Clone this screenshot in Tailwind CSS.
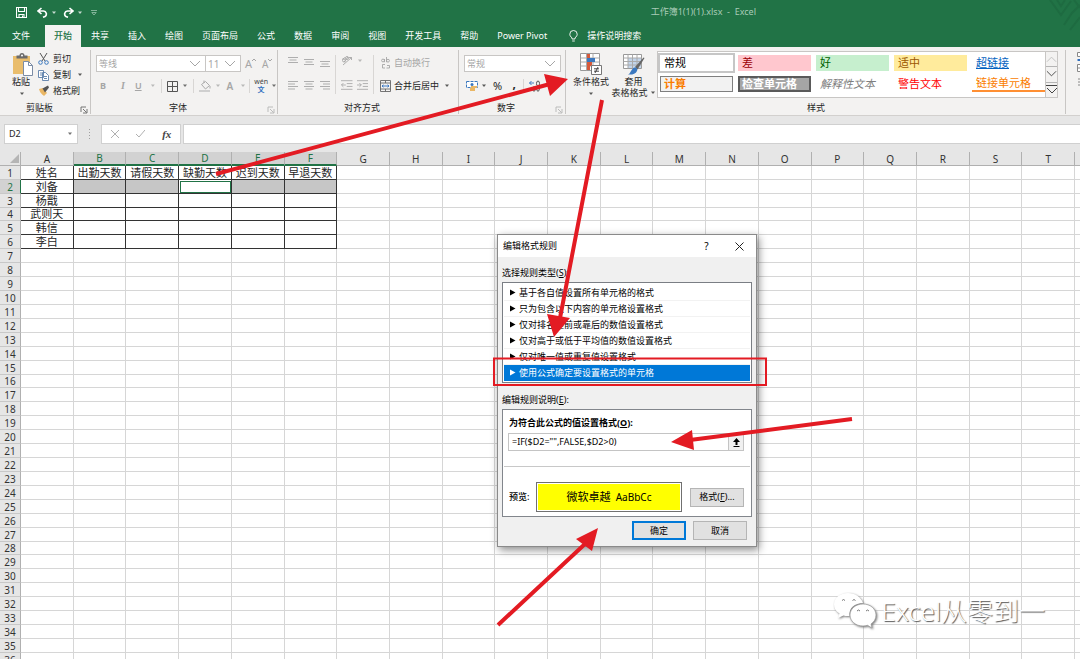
<!DOCTYPE html>
<html lang="zh-CN">
<head>
<meta charset="utf-8">
<title>工作簿1(1)(1).xlsx - Excel</title>
<script src="https://cdn.jsdelivr.net/npm/@tailwindcss/browser@4"></script>
</head>
<body class="relative flex h-screen flex-col overflow-hidden bg-[#e6e6e6] font-['Noto_Sans','Noto_Sans_CJK_SC',sans-serif] text-[9px] leading-3 text-[#262626]">

<svg class="hidden">
  <symbol id="caret" viewBox="0 0 6 4"><path d="M1 .5h4L3 3z" fill="currentColor" opacity=".75"/></symbol>
  <symbol id="chev" viewBox="0 0 12 8"><path d="M1 1l5 5 5-5" fill="none" stroke="currentColor"/></symbol>
  <symbol id="launch" viewBox="0 0 8 8"><path d="M1 6V1h5M3 3l3.500 3.500M7 3v4H3" fill="none" stroke="currentColor" stroke-width=".9"/></symbol>
  <symbol id="alL" viewBox="0 0 10 10"><path d="M0 1.500h10M0 4h7M0 6.500h10M0 9h7" stroke="currentColor" stroke-width=".9"/></symbol>
  <symbol id="alC" viewBox="0 0 10 10"><path d="M0 1.500h10M1.500 4h7M0 6.500h10M1.500 9h7" stroke="currentColor" stroke-width=".9"/></symbol>
  <symbol id="alR" viewBox="0 0 10 10"><path d="M0 1.500h10M3 4h7M0 6.500h10M3 9h7" stroke="currentColor" stroke-width=".9"/></symbol>
</svg>

<header class="relative bg-[#217346] text-white">
  <svg class="absolute top-0 right-0 h-[47px] w-9" viewBox="0 0 36 47" fill="none" stroke="#1e6b41" stroke-width="2"><path d="M6 0l11 15L27 1M13 0l4 6 4-6M20 25l8-12 8-8M26 30l10-13M30 0l6 8"/></svg>
  <div class="grid h-[25px] grid-cols-[1fr_auto] items-center pr-[324px]">
    <div class="flex items-center pl-4">
      <button aria-label="保存" class="h-[11px] w-[11px]"><svg viewBox="0 0 11 11" fill="none" stroke="#fff" class="h-full w-full"><path d="M.5.5h10v10H.5zM2.500.5v4h6v-4M3 10.500V7.500h5v3M6.500 8.500v2" stroke-width="1.100"/></svg></button>
      <button aria-label="撤消" class="ml-[10px] flex items-center gap-[3px]"><svg viewBox="0 0 11 11" class="h-[11px] w-[11px]" fill="none" stroke="#fff" stroke-width="1.600"><path d="M4.500 1L1 4l3.500 3M1.500 4h5a3 3 0 0 1 1.500 5.500L6 10.300"/></svg><svg class="h-1 w-[6px]"><use href="#caret"/></svg></button>
      <button aria-label="恢复" class="ml-[6px] flex items-center gap-[3px]"><svg viewBox="0 0 11 11" class="h-[11px] w-[11px]" fill="none" stroke="#fff" stroke-width="1.600"><path d="M6.500 1L10 4 6.500 7M9.500 4h-5A3 3 0 0 0 3 9.500l2 .8"/></svg><svg class="h-1 w-[6px]"><use href="#caret"/></svg></button>
      <button aria-label="自定义快速访问工具栏" class="ml-2 h-[6px] w-[6px] text-[#9cc5ae]"><svg viewBox="0 0 6 6" class="h-full w-full" fill="none" stroke="currentColor" stroke-width=".8"><path d="M0 .5h6M.8 2.500h4.400L3 5z"/></svg></button>
    </div>
    <h1 class="pb-[2px] whitespace-pre text-[#a9cbb7]">工作簿1(1)(1).xlsx  -  Excel</h1>
  </div>
  <nav class="flex h-[22px] items-center gap-[19px] pl-3 whitespace-nowrap">
    <button>文件</button>
    <button class="-mr-[9px] -ml-1 h-full bg-[#f3f2f1] px-[9px] font-medium text-[#217346]">开始</button>
    <button>共享</button><button>插入</button><button>绘图</button><button>页面布局</button><button>公式</button><button>数据</button><button>审阅</button><button>视图</button><button>开发工具</button><button>帮助</button><button>Power Pivot</button>
    <button class="ml-[3px] flex items-center gap-[9px]"><svg viewBox="0 0 9 12" class="h-3 w-[9px]" fill="none" stroke="#fff" stroke-width=".9"><path d="M3 9V7.800C1.500 6.800.8 5.500.8 4.200a3.700 3.700 0 0 1 7.400 0C8.200 5.500 7.500 6.800 6 7.800V9zM3.200 11h2.600"/></svg>操作说明搜索</button>
  </nav>
</header>

<div class="flex h-[69px] shrink-0 items-stretch overflow-hidden border-b border-[#d2d0ce] bg-[#f3f2f1] pt-[3px] pb-px whitespace-nowrap">
  <!-- clipboard -->
  <section class="flex w-[91px] shrink-0 flex-col border-r border-[#c8c6c4]">
    <div class="flex flex-1 gap-1 pl-3">
      <button class="flex flex-col items-start pt-[3px]">
        <svg viewBox="0 0 22 23" class="h-[23px] w-[22px]"><path d="M1 3h17v18H1z" fill="#e9bd6c"/><path d="M4.500 5.500V2.500h3a2.500 2.500 0 0 1 5 0h3v3z" fill="#6b6b6b"/><circle cx="10" cy="2.500" r="1" fill="#fff"/><path d="M11.500 8.500h5l4 4v10h-9z" fill="#fff" stroke="#7b8ca5"/><path d="M16.500 8.500v4h4" fill="none" stroke="#7b8ca5"/></svg>
        <span>粘贴</span><svg class="mt-1 ml-[7px] h-1 w-[6px]"><use href="#caret"/></svg>
      </button>
      <div class="flex flex-col gap-1 pt-[3px]">
        <button class="flex items-center gap-1"><svg viewBox="0 0 11 12" class="h-3 w-[11px]" fill="none"><path d="M2 0l5 8M9 0L4 8" stroke="#555"/><circle cx="2.500" cy="9.500" r="1.800" stroke="#3b78bf"/><circle cx="8.500" cy="9.500" r="1.800" stroke="#3b78bf"/></svg>剪切</button>
        <button class="flex items-center gap-1"><svg viewBox="0 0 11 12" class="h-3 w-[11px]" fill="#fff" stroke="#5b7ea8" stroke-width=".9"><path d="M.5 1.500h5v7h-5zM4.500 3.500h3l3 3v5h-6z"/><path d="M2 4h2M2 6h2M6 7.500h3M6 9.500h3"/></svg>复制<svg class="ml-[2px] h-1 w-[6px]"><use href="#caret"/></svg></button>
        <button class="flex items-center gap-1"><svg viewBox="0 0 11 12" class="h-3 w-[11px]"><path d="M1 4l4-1 4 5-3 3C4 9 2 8 1 4z" fill="#eab765"/><path d="M4.500 3.500L10 .5l1 2-4 5z" fill="#555"/></svg>格式刷</button>
      </div>
    </div>
    <div class="flex items-center pl-[26px]"><span class="flex-1">剪贴板</span><svg class="mt-1 mr-[2px] h-2 w-2 text-[#666]"><use href="#launch"/></svg></div>
  </section>

  <!-- font -->
  <section class="flex w-[187px] shrink-0 flex-col border-r border-[#c8c6c4]">
    <div class="flex flex-1 flex-col gap-[6px] pt-[5px] pl-[5px] text-[#a6a6a6]">
      <div class="flex h-[17px] items-center">
        <div class="flex h-full w-[110px] items-center border border-[#c8c6c4] bg-white pr-1"><select aria-label="字体" class="min-w-0 flex-1 appearance-none pl-[2px]"><option>等线</option></select><svg class="h-2 w-3"><use href="#chev"/></svg></div>
        <div class="-ml-px flex h-full w-9 items-center border border-[#c8c6c4] bg-white pr-1"><select aria-label="字号" class="min-w-0 flex-1 appearance-none pl-[2px] text-[10px]"><option>11</option></select><svg class="h-2 w-3"><use href="#chev"/></svg></div>
        <button class="ml-1 flex text-[11px]">A<svg viewBox="0 0 4 4" class="h-1 w-1"><path d="M0 3l2-2 2 2" fill="none" stroke="currentColor"/></svg></button>
        <button class="ml-[6px] flex text-[10px]">A<svg viewBox="0 0 4 4" class="h-1 w-1"><path d="M0 1l2 2 2-2" fill="none" stroke="currentColor"/></svg></button>
      </div>
      <div class="flex h-4 items-center pl-1">
        <button class="w-4 text-left font-bold">B</button><button class="w-4 text-center font-['Liberation_Serif'] text-[10px] font-bold italic">I</button><button class="w-4 text-center font-semibold underline">U</button>
        <svg class="ml-1 h-1 w-[6px]"><use href="#caret"/></svg><i class="mx-[5px] h-[14px] w-px bg-[#d8d6d4]"></i>
        <button aria-label="边框" class="flex items-center gap-1 text-[#444]"><svg viewBox="0 0 11 11" class="h-[11px] w-[11px]" fill="none" stroke="#555"><path d="M.5.5h10v10H.5zM5.500 1v9M1 5.500h9"/></svg><svg class="h-1 w-[6px]"><use href="#caret"/></svg></button>
        <i class="mx-[5px] h-[14px] w-px bg-[#d8d6d4]"></i>
        <button aria-label="填充颜色" class="flex items-center gap-1"><svg viewBox="0 0 12 12" class="h-3 w-3" fill="none" stroke="#aaa"><path d="M2.500 4.500l4-3 4 4-4 3.500zM5 3V.5M11 6v2.500"/><path d="M0 11h11" stroke="#cfcfcf" stroke-width="2"/></svg><svg class="h-1 w-[6px]"><use href="#caret"/></svg></button>
        <button class="ml-[6px] flex items-center gap-[7px] text-[10px] font-semibold">A<svg class="h-1 w-[6px]"><use href="#caret"/></svg></button>
        <i class="mr-1 ml-[3px] h-[14px] w-px bg-[#d8d6d4]"></i>
        <button class="flex items-center gap-[3px] text-[#444]"><span class="flex flex-col items-center text-[7px] leading-[8px]"><span>wén</span><span class="font-bold text-[#2f6fc0]">文</span></span><svg class="h-1 w-[6px]"><use href="#caret"/></svg></button>
      </div>
    </div>
    <div class="flex items-center pl-[78px]"><span class="flex-1">字体</span><svg class="mt-1 mr-[2px] h-2 w-2 text-[#b5b5b5]"><use href="#launch"/></svg></div>
  </section>

  <!-- alignment -->
  <section class="flex w-[181px] shrink-0 flex-col border-r border-[#c8c6c4]">
    <div class="flex flex-1 pt-[5px] pl-[10px] text-[#a6a6a6]">
      <div class="grid grid-cols-3 content-start gap-x-[6px] gap-y-[15px]">
        <svg class="h-[10px] w-[10px]" viewBox="0 0 10 10"><path d="M0 2.500h10M1.500 5h7M0 7.500h10" stroke="currentColor" stroke-width=".9"/></svg>
        <svg class="h-[10px] w-[10px]" viewBox="0 0 10 10"><path d="M0 4.500h10M1.500 7h7M0 9.500h10" stroke="currentColor" stroke-width=".9"/></svg>
        <svg class="h-[12px] w-[10px] -mb-[2px]" viewBox="0 0 10 12"><path d="M0 6.500h10M1.500 9h7M0 11.500h10" stroke="currentColor" stroke-width=".9"/></svg>
        <svg class="h-[10px] w-[10px]"><use href="#alL"/></svg><svg class="h-[10px] w-[10px]"><use href="#alC"/></svg><svg class="h-[10px] w-[10px]"><use href="#alR"/></svg>
      </div>
      <i class="mx-[5px] h-[39px] w-px bg-[#d8d6d4]"></i>
      <div class="flex w-[27px] flex-col gap-[13px]">
        <div class="flex items-center gap-1"><svg viewBox="0 0 12 12" class="h-3 w-3" fill="none" stroke="currentColor" stroke-width=".9"><path d="M2 10L10.500 2.500M8 2.500h2.500V5M1 4.500l3-2M3 7l4-5"/><circle cx="3" cy="5.500" r="1.500"/><circle cx="6" cy="3" r="1.500"/></svg><svg class="h-1 w-[6px]"><use href="#caret"/></svg></div>
        <div class="flex gap-1"><svg viewBox="0 0 12 10" class="h-[10px] w-3" fill="none" stroke="currentColor" stroke-width=".9"><path d="M0 .5h12M6 3.500h6M6 6.500h6M0 9.500h12M5 5H.5M2.500 3L.5 5l2 2"/></svg><svg viewBox="0 0 12 10" class="h-[10px] w-3" fill="none" stroke="currentColor" stroke-width=".9"><path d="M0 .5h12M6 3.500h6M6 6.500h6M0 9.500h12M0 5h4.500M2.500 3l2 2-2 2"/></svg></div>
      </div>
      <i class="mx-[5px] h-[39px] w-px bg-[#d8d6d4]"></i>
      <div class="flex flex-col gap-[11px] pt-[2px] pl-px">
        <button class="flex items-center gap-[3px]"><svg viewBox="0 0 11 12" class="h-3 w-[11px]" fill="none" stroke="currentColor" stroke-width=".9"><circle cx="3" cy="3.500" r="1.400"/><path d="M4.500 2v3.200M6.500 0v5.200"/><circle cx="8" cy="3.700" r="1.400"/><path d="M5 7.500H2.500v3.500H5M7 8.500h2.500V11H6.500"/></svg>自动换行</button>
        <button class="flex items-center gap-[3px] text-[#262626]"><svg viewBox="0 0 11 12" class="h-3 w-[11px]" fill="none" stroke="#666" stroke-width=".9"><path d="M.5.500h10v11H.5zM.5 3h10M.5 9h10M5.500.5V3M5.500 9v2.500"/><path d="M2 6h7M3.500 4.800L2 6l1.500 1.200M7.500 4.800L9 6 7.500 7.200" stroke="#2f6fc0"/></svg>合并后居中<svg class="ml-[2px] h-1 w-[6px]"><use href="#caret"/></svg></button>
      </div>
    </div>
    <div class="pl-[66px]">对齐方式</div>
  </section>

  <!-- number -->
  <section class="flex w-[107px] shrink-0 flex-col border-r border-[#c8c6c4]">
    <div class="flex flex-1 flex-col gap-[6px] pt-[5px] pl-[5px]">
      <div class="flex h-[17px] w-[97px] items-center border border-[#c8c6c4] bg-white pr-1 text-[#a6a6a6]"><select aria-label="数字格式" class="min-w-0 flex-1 appearance-none pl-[2px]"><option>常规</option></select><svg class="h-2 w-3"><use href="#chev"/></svg></div>
      <div class="flex h-4 items-center pl-[2px]">
        <svg viewBox="0 0 13 12" class="h-3 w-[13px]"><path d="M.5 1.500h11v6H.5z" fill="#fff" stroke="#3b78bf" stroke-dasharray="3 1"/><circle cx="6" cy="4.500" r="1.500" fill="#3b78bf"/><path d="M5 6h6v2H9v3H4V8h1z" fill="#eab765"/></svg>
        <svg class="ml-[2px] h-1 w-[6px]"><use href="#caret"/></svg>
        <button class="ml-[6px] text-[11px]">%</button><button class="ml-2 w-2 pb-1 text-xs font-bold">,</button>
        <i class="mx-[5px] h-[14px] w-px bg-[#d8d6d4]"></i>
        <button aria-label="增加小数位数"><svg viewBox="0 0 12 12" class="h-3 w-3" fill="none" stroke="#444" stroke-width=".9"><path d="M5 3H.5M2.500 1L.5 3l2 2" stroke="#2f6fc0"/><ellipse cx="9" cy="3.500" rx="1.500" ry="2.500"/><ellipse cx="5" cy="9" rx="1.300" ry="2.200"/><ellipse cx="9" cy="9" rx="1.300" ry="2.200"/></svg></button>
      </div>
    </div>
    <div class="flex items-center pl-[38px]"><span class="flex-1">数字</span><svg class="mt-1 mr-[2px] h-2 w-2 text-[#b5b5b5]"><use href="#launch"/></svg></div>
  </section>

  <!-- styles -->
  <section class="flex min-w-[500px] flex-col border-r border-[#c8c6c4]">
    <div class="flex flex-1">
      <button class="ml-[7px] flex w-9 flex-col items-center pt-[3px]">
        <svg viewBox="0 0 22 23" class="h-[23px] w-[22px]"><path d="M.5.5h19v17H.5z" fill="#fff" stroke="#999"/><path d="M.5 5h19M.5 9h19M.5 13h19M6.500.5v17M13 .5v17" stroke="#aaa"/><path d="M7 1h3v4H7zM7 9h5v4H7z" fill="#d6593b"/><path d="M7 5h8v4H7z" fill="#3b78bf"/><path d="M7 13h3v4H7z" fill="#d6593b"/><path d="M11.500 12.500h10v9h-10z" fill="#fff" stroke="#777"/><path d="M14 15.800h5M14 18.200h5M18 14l-3 6" stroke="#333" stroke-width=".9"/></svg>
        <span>条件格式</span><svg class="mt-1 h-1 w-[6px]"><use href="#caret"/></svg>
      </button>
      <button class="ml-[3px] flex w-[43px] flex-col items-center pt-[3px] leading-[11px]">
        <svg viewBox="0 0 22 23" class="h-[23px] w-[22px] shrink-0"><path d="M.5 1.500h18v14H.5z" fill="#fff" stroke="#999"/><path d="M5 5h13v10H5z" fill="#c3d5ea"/><path d="M.5 5h18M.5 8.500h18M.5 12h18M5 1.500v14M9.500 1.500v14M14 1.500v14" stroke="#aaa"/><path d="M21.500 5l-1-.5L12 14l2.500 2.500z" fill="#666"/><path d="M11.500 14.500c2 0 3.500 1.500 2.500 3.500-1.500 3-5 4-9 3.500 3-1 3-6 6.500-7z" fill="#3b78bf"/></svg>
        <span>套用</span><span class="flex items-center gap-[2px]">表格格式<svg class="h-1 w-[6px]"><use href="#caret"/></svg></span>
      </button>
      <div class="mt-px ml-[2px] flex h-[47px] border border-[#c8c6c4] bg-white text-[11px] leading-4">
        <div class="grid grid-cols-5 content-start gap-x-[5px] gap-y-[5px] pt-[3px] pl-[2px]">
          <button class="w-[73px] bg-white pl-1 text-left text-black outline-2 outline-[#c6c6c6]">常规</button>
          <button class="w-[73px] bg-[#ffc7ce] pl-1 text-left text-[#9c0006]">差</button>
          <button class="w-[73px] bg-[#c6efce] pl-1 text-left text-[#006100]">好</button>
          <button class="w-[73px] bg-[#ffeb9c] pl-1 text-left text-[#9c5700]">适中</button>
          <button class="w-[73px] pl-1 text-left text-[#0563c1] underline">超链接</button>
          <button class="w-[73px] border border-[#7f7f7f] bg-[#f2f2f2] pl-[3px] text-left leading-[14px] font-bold text-[#fa7d00]">计算</button>
          <button class="w-[73px] border-2 border-[#5a5a5a] bg-[#a5a5a5] pl-[2px] text-left leading-3 font-bold text-white">检查单元格</button>
          <button class="w-[73px] pl-1 text-left text-[#7f7f7f] italic">解释性文本</button>
          <button class="w-[73px] pl-1 text-left text-[#ff0000]">警告文本</button>
          <button class="w-[73px] border-b-2 border-[#ff8f33] pl-1 text-left leading-[14px] text-[#fa7d00]">链接单元格</button>
        </div>
        <div class="flex w-3 flex-col divide-y divide-[#b5b5b5] border-l border-[#c8c6c4] bg-[#f3f2f1] text-[#444]">
          <button class="flex flex-1 items-center justify-center text-[#c0c0c0]"><svg class="h-2 w-3 rotate-180"><use href="#chev"/></svg></button>
          <button class="flex flex-1 items-center justify-center"><svg class="h-2 w-3"><use href="#chev"/></svg></button>
          <button class="flex flex-1 flex-col items-center justify-center gap-px"><i class="h-px w-full bg-[#444]"></i><svg class="h-2 w-3"><use href="#chev"/></svg></button>
        </div>
      </div>
    </div>
    <div class="pl-[241px]">样式</div>
  </section>
  <section class="flex-1 overflow-hidden pt-[2px] pl-[11px]">
    <svg viewBox="0 0 20 36" class="h-9 w-5" fill="#fff" stroke="#888"><path d="M.5.500h14v4H.5z"/><path d="M.5 8h5" stroke="#2f6fc0" stroke-width="2"/><path d="M.5 12.500h14v7H.5zM0 16h8M1 27h8M1 30h8M1 33h6"/></svg>
  </section>
</div>

<!-- formula bar -->
<div class="flex h-9 shrink-0 items-center pt-px pb-px pl-1">
  <div class="flex h-5 w-[74px] items-center border border-[#d0d0d0] bg-white pr-1"><input aria-label="名称框" value="D2" class="min-w-0 flex-1 pl-1"><svg class="h-1 w-[6px] text-[#444]"><use href="#caret"/></svg></div>
  <svg viewBox="0 0 3 12" class="mx-[10px] h-3 w-[3px]" fill="#a0a0a0"><path d="M1 1h1v1H1zM1 4h1v1H1zM1 7h1v1H1zM1 10h1v1H1z"/></svg>
  <div class="flex h-5 w-[80px] items-center justify-around border border-[#d0d0d0] bg-white text-[#b0b0b0]">
    <button aria-label="取消输入"><svg viewBox="0 0 8 8" class="h-2 w-2" stroke="currentColor"><path d="M0 0l8 8M8 0L0 8"/></svg></button>
    <button aria-label="输入"><svg viewBox="0 0 9 8" class="h-2 w-[9px]" fill="none" stroke="currentColor"><path d="M0 4l3 3 6-7"/></svg></button>
    <button class="font-['Liberation_Serif'] text-[11px] font-bold text-[#444] italic">fx</button>
  </div>
  <input aria-label="编辑栏" class="ml-[2px] h-5 min-w-0 flex-1 border border-r-0 border-[#d0d0d0] bg-white px-1">
</div>

<!-- worksheet -->
<main class="min-h-0 flex-1 overflow-hidden bg-white">
  <table class="w-[1128px] table-fixed border-separate border-spacing-0 text-center text-[11px]" id="sheet"></table>
</main>

<!-- rule dialog -->
<section role="dialog" aria-labelledby="dlg" class="absolute top-[234px] left-[497px] flex w-[260px] flex-col border border-[#8a8a8a] bg-[#f0f0f0] pb-[6px] text-black shadow-[2px_3px_8px_rgba(0,0,0,0.45)]">
  <div class="flex h-[22px] items-center bg-white pl-[5px]">
    <h2 id="dlg" class="flex-1">编辑格式规则</h2>
    <button class="w-[9px] text-[10px]">?</button>
    <button aria-label="关闭" class="mr-3 ml-6"><svg viewBox="0 0 9 9" class="h-[9px] w-[9px]" stroke="#222"><path d="M.5.5l8 8M8.500.5l-8 8"/></svg></button>
  </div>
  <div class="px-1">
    <p class="pt-[10px] pb-[3px]">选择规则类型(<u>S</u>):</p>
    <ul class="border border-[#7a7e84] bg-white px-px pt-[2px] pb-px leading-[15px]" role="listbox">
      <li class="border-b border-[#f2f2f2]"><button class="flex w-full items-center gap-[3px] pl-[5px]"><svg viewBox="0 0 7 7" class="h-[7px] w-[7px]"><path d="M1 .5l5.500 3L1 6.500z"/></svg>基于各自值设置所有单元格的格式</button></li>
      <li class="border-b border-[#f2f2f2]"><button class="flex w-full items-center gap-[3px] pl-[5px]"><svg viewBox="0 0 7 7" class="h-[7px] w-[7px]"><path d="M1 .5l5.500 3L1 6.500z"/></svg>只为包含以下内容的单元格设置格式</button></li>
      <li class="border-b border-[#f2f2f2]"><button class="flex w-full items-center gap-[3px] pl-[5px]"><svg viewBox="0 0 7 7" class="h-[7px] w-[7px]"><path d="M1 .5l5.500 3L1 6.500z"/></svg>仅对排名靠前或靠后的数值设置格式</button></li>
      <li class="border-b border-[#f2f2f2]"><button class="flex w-full items-center gap-[3px] pl-[5px]"><svg viewBox="0 0 7 7" class="h-[7px] w-[7px]"><path d="M1 .5l5.500 3L1 6.500z"/></svg>仅对高于或低于平均值的数值设置格式</button></li>
      <li class="border-b border-[#f2f2f2]"><button class="flex w-full items-center gap-[3px] pl-[5px]"><svg viewBox="0 0 7 7" class="h-[7px] w-[7px]"><path d="M1 .5l5.500 3L1 6.500z"/></svg>仅对唯一值或重复值设置格式</button></li>
      <li class="border-b border-[#0078d7] bg-[#0078d7] text-white"><button class="flex w-full items-center gap-[3px] pl-[5px]"><svg viewBox="0 0 7 7" class="h-[7px] w-[7px]" fill="#fff"><path d="M1 .5l5.500 3L1 6.500z"/></svg>使用公式确定要设置格式的单元格</button></li>
    </ul>
    <p class="pt-[11px] pb-[3px]">编辑规则说明(<u>E</u>):</p>
    <div class="border border-[#82868c] bg-white pb-1">
      <label for="formula" class="block pt-[7px] pb-[4px] pl-[6px] font-bold">为符合此公式的值设置格式(<u>O</u>):</label>
      <div class="mr-[7px] ml-[5px] flex h-[18px] border border-[#c4c4c4]">
        <input id="formula" value='=IF($D2="",FALSE,$D2&gt;0)' class="min-w-0 flex-1 pl-[3px]">
        <button aria-label="折叠对话框" class="flex w-[15px] items-center justify-center border-l border-[#c4c4c4] bg-[#f0f0f0]"><svg viewBox="0 0 7 9" class="h-[9px] w-[7px]"><path d="M3.500 0L7 4H4.500v3h-2V4H0zM.5 8h6v1h-6z"/></svg></button>
      </div>
      <hr class="mx-px mt-[15px] border-[#c8c8c8]">
      <div class="mt-[15px] flex items-center pr-[7px] pl-[6px]">
        <span class="w-[27px] font-medium">预览:</span>
        <div class="flex h-[30px] flex-1 border border-[#707070] p-px"><div class="flex flex-1 items-center justify-center bg-[#ffff00] text-[10px] whitespace-pre"><span class="text-[11px]">微软卓越</span>  AaBbCc</div></div>
        <button class="ml-2 h-[19px] w-[54px] border border-[#b5b5b5] bg-[#e1e1e1]">格式(<u>F</u>)...</button>
      </div>
    </div>
    <div class="flex justify-end gap-[7px] pt-1 pr-[5px]">
      <button class="h-[19px] w-[54px] border-2 border-[#0078d7] bg-[#e1e1e1]">确定</button>
      <button class="h-[19px] w-[54px] border border-[#b5b5b5] bg-[#e1e1e1]">取消</button>
    </div>
  </div>
</section>

<!-- watermark -->
<div class="absolute right-[35px] bottom-[29px] flex items-center gap-1 text-[26px] leading-9 font-light whitespace-nowrap text-white [text-shadow:1px_1px_1px_#555]">
  <svg viewBox="0 0 44 38" class="h-[38px] w-[44px] drop-shadow-[1px_1px_1px_#777]" fill="#fff"><path d="M15 1C7 1 1 6 1 12.500c0 4 2 7 5.500 9L5 26l5.500-2.500c2 .5 3 .7 6 .5C15.500 16 22 11 30 11 28 5 22 1 15 1z"/><path d="M30 12c-7.500 0-13 5-13 11s5.500 11 13 11c1.500 0 3-.2 4.500-.7L39 36l-1-4c3-2 5-5 5-9 0-6-5.500-11-13-11z" stroke="#999" stroke-width=".7"/><path d="M9 8.500q1.500-2 3 0M19.500 8.500q1.500-2 3 0M24 19q1.500-2 3 0M33 19q1.500-2 3 0" fill="none" stroke="#777"/></svg>
  <span>Excel从零到一</span>
</div>

<!-- callout arrows -->
<svg class="pointer-events-none absolute top-0 left-0 h-[659px] w-[1080px]" viewBox="0 0 1080 659" stroke="#e31b23" stroke-width="4" fill="none">
  <path d="M216 174L550 84M602 100L560 318M852 419L690 440M498 625L586 543"/>
  <path d="M568 79L544 74 550 96zM554 337L547 314 570 318zM671 442L692 430 694 450zM598 528L576 539 592 551z" fill="#e31b23" stroke="none"/>
  <path d="M494 358.500h272v26.500H494z" stroke-width="2"/>
</svg>

<script>
const heads = ['姓名','出勤天数','请假天数','缺勤天数','迟到天数','早退天数'];
const names = ['刘备','杨戬','武则天','韩信','李白'];
let html = '<colgroup><col class="w-[21px]"></colgroup><thead><tr><th class="h-[14px] border-r border-b border-[#b0b0b0] bg-[#e6e6e6] p-0"><svg viewBox="0 0 9 9" class="ml-auto mr-px h-[9px] w-[9px]"><path d="M9 0v9H0z" fill="#b5b5b5"/></svg></th>';
for (let c = 0; c < 21; c++) {
  const on = c > 0 && c < 6;
  html += '<th scope="col" class="overflow-hidden border-r p-0 text-[10px] leading-[12px] font-normal ' + (on ? 'border-b-2 border-r-[#b0b0b0] border-b-[#217346] bg-[#d2d2d2] text-[#217346]' : 'border-b border-[#b0b0b0] bg-[#e6e6e6] text-[#333]') + '">' + (c < 20 ? String.fromCharCode(65 + c) : '') + '</th>';
}
html += '</tr></thead><tbody>';
for (let r = 1; r < 37; r++) {
  html += '<tr class="' + (r % 12 === 4 ? 'h-[13px]' : 'h-[14px]') + '"><th scope="row" class="border-r border-b border-b-[#c8c8c8] p-0 font-normal text-[10px] leading-[12px] ' + (r === 2 ? 'border-r-[#217346] bg-[#d2d2d2] text-[#217346]' : 'border-r-[#b0b0b0] bg-[#e6e6e6] text-[#333]') + '">' + r + '</th>';
  for (let c = 0; c < 21; c++) {
    const data = r < 7 && c < 6;
    let cls = 'border-r border-b p-0 leading-[12px] whitespace-nowrap ' + (data ? 'border-[#333]' : 'border-[#d6d6d6]');
    if (r === 2 && c > 0 && c < 6) cls += c === 3 ? ' bg-white outline-1 -outline-offset-2 outline-[#217346]' : ' bg-[#c6c6c6]';
    const text = !data ? '' : r === 1 ? heads[c] : c === 0 ? names[r - 2] : '';
    html += '<td class="' + cls + '">' + text + '</td>';
  }
  html += '</tr>';
}
document.getElementById('sheet').innerHTML = html + '</tbody>';
</script>
</body>
</html>
